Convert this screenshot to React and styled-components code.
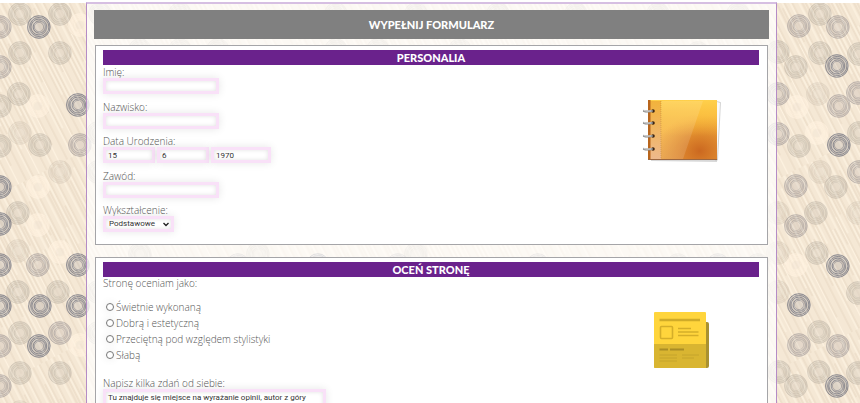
import React from "react";
import styled, { createGlobalStyle } from "styled-components";

const GlobalStyle = createGlobalStyle`
  * { box-sizing: border-box; }
  body { margin: 0; background: #fff; }
`;

const textFont = '"Open Sans", "Noto Sans", sans-serif';

const Page = styled.div`
  position: relative;
  height: 100vh;
  overflow: hidden auto;
  scrollbar-width: none;
  padding: 2px 83px 0 86px;
  font: 300 10px/12px ${textFont};
  color: #555;
`;

const Backdrop = styled.svg`
  position: absolute;
  inset: 3px 0 0;
  width: 100%;
  height: calc(100% - 3px);
`;

const Panel = styled.main`
  position: relative;
  display: flex;
  flex-direction: column;
  padding: 6px 7px 20px;
  border: 1px solid #b58cc6;
  border-top: 2px solid #d6bfe2;
  background: rgba(255, 255, 255, 0.73);
`;

const Title = styled.h1`
  margin: 0 0 6px;
  background: #808080;
  color: #fff;
  font: 900 11px/29px Lato, sans-serif;
  text-align: center;
`;

const Section = styled.section`
  margin: 0 1px 12px;
  padding: 4px 8px 12px 7px;
  border: 1px solid #a5a5a8;
  background: #fff;
`;

const SectionTitle = styled.h2`
  margin: 0;
  background: #6a228c;
  color: #fff;
  font: 900 11px/15px Lato, sans-serif;
  text-align: center;
`;

const SectionBody = styled.div`
  display: grid;
  grid-template-columns: 1fr 156px;
`;

const Picture = styled.div`
  display: flex;
  justify-content: center;
  align-items: flex-start;
  padding-top: 33px;
`;

const Fields = styled.div`
  display: flex;
  flex-direction: column;
  justify-content: space-between;
  min-height: 167px;
  padding-top: 1px;
`;

const Field = styled.div`
  display: flex;
  flex-direction: column;
  align-items: flex-start;
`;

const Controls = styled.div`
  display: flex;
  gap: 2px;
`;

const control = `
  margin: 0;
  border: 3px solid #f9e1f8;
  border-radius: 0;
  background: #fff;
  box-shadow: 0 0 8px rgba(0, 0, 0, 0.1), inset 0 0 4px rgba(0, 0, 0, 0.12);
  color: #333;
  font: 400 8px/10px Roboto, sans-serif;
  outline: none;
`;

const TextBox = styled.input`
  ${control}
  width: ${(p) => p.$width || 116}px;
  height: 16px;
  padding: 0 2px;
`;

const SelectWrap = styled.div`
  position: relative;
  display: flex;
`;

const Select = styled.select`
  ${control}
  appearance: none;
  width: 71px;
  height: 16px;
  padding: 0 3px;
`;

const Chevron = styled.svg`
  position: absolute;
  right: 5px;
  top: 6px;
  width: 6px;
  height: 5px;
  pointer-events: none;
`;

const Choices = styled.fieldset`
  margin: 0 0 14px;
  padding: 0;
  border: 0;
  line-height: 16px;
`;

const Legend = styled.legend`
  margin-bottom: 10px;
  padding: 0;
  line-height: 12px;
`;

const Choice = styled.label`
  display: flex;
  align-items: center;
  gap: 2px;
  padding-left: 3px;
`;

const Radio = styled.input`
  appearance: none;
  width: 8px;
  height: 8px;
  margin: 0;
  border: 1px solid #777;
  border-radius: 50%;
  background: #fff;
  box-shadow: 0 0 8px rgba(0, 0, 0, 0.1);
  &:checked { background: #6a228c; }
`;

const Opinion = styled.textarea`
  ${control}
  width: 223px;
  height: 60px;
  padding: 1px 2px;
  resize: none;
  overflow: hidden;
`;

const tones = {
  cream: { color: "#fff2df", line: 0.5, fill: 0.6 },
  faint: { color: "#b0a598", line: 0.14, fill: 0.12 },
  light: { color: "#9c9389", line: 0.22, fill: 0.18 },
  mid: { color: "#858287", line: 0.38, fill: 0.2 },
  dark: { color: "#5d6072", line: 0.6, fill: 0.22 },
};

const rings = {
  cream: [[80, 25], [38, 106], [38, 187], [38, 225], [60, 252], [80, 345], [797, 107], [817, 133], [796, 265]],
  faint: [[20, 133], [60, 172], [18, 251], [818, 94], [820, 172], [778, 213], [778, 253], [778, 292], [20, 412], [858, 213]],
  light: [
    [20, 14], [60, 14], [20, 53], [60, 53], [19, 94], [0, 106], [0, 146], [40, 145], [18, 213], [18, 292],
    [58, 292], [20, 333], [20, 373], [60, 373], [820, 14], [778, 52], [820, 53], [796, 67], [859, 54],
    [799, 146], [859, 133], [836, 187], [816, 213], [817, 253], [858, 293], [819, 332], [779, 372],
    [819, 372], [796, 386], [858, 373], [100, 14], [180, 14], [336, 14], [416, 14], [498, 14], [576, 14],
    [658, 14], [738, 14], [140, 50], [180, 50], [218, 50], [336, 50], [378, 50], [460, 50], [698, 53],
    [98, 133], [98, 172], [98, 292], [98, 333], [140, 254], [258, 254], [416, 254], [758, 265], [678, 265],
  ],
  mid: [
    [0, 27], [80, 145], [38, 265], [60, 333], [0, 346], [838, 27], [858, 93], [778, 94], [839, 106],
    [778, 134], [859, 172], [796, 226], [838, 346], [238, 265], [718, 265], [398, 265], [538, 265],
    [799, 26], [796, 186], [799, 345], [0, 67], [0, 386],
  ],
  dark: [
    [39, 27], [78, 105], [0, 187], [0, 224], [0, 265], [78, 265], [0, 306], [40, 306], [78, 306], [39, 346],
    [837, 66], [839, 145], [838, 266], [799, 305], [837, 386], [318, 265],
  ],
};

function Ring({ x, y, tone }) {
  const t = tones[tone];
  return (
    <g transform={`translate(${x} ${y - 3})`} stroke={t.color} fill="none">
      <circle r="11.7" fill={t.color} fillOpacity={t.fill} stroke="none" />
      {[11.3, 9.6, 7.9, 6.1].map((r, i) => (
        <circle key={r} cx={i % 2 ? 0.3 : -0.2} r={r} strokeWidth="1" strokeOpacity={t.line} />
      ))}
      <circle r="4.6" fill="#eee2d3" fillOpacity="0.4" strokeWidth="0.6" strokeOpacity={t.line} />
    </g>
  );
}

function PatternBackdrop() {
  return (
    <Backdrop viewBox="0 0 860 400" preserveAspectRatio="xMidYMin slice" aria-hidden="true">
      <defs>
        <pattern id="grain" width="23" height="170" patternUnits="userSpaceOnUse" patternTransform="rotate(-27)">
          <path d="M2 0V90M5 20V150M9 0V60M12 40V170M16 0V120M20 70V170" stroke="#dccbb5" strokeOpacity=".4" strokeWidth="1.1" />
          <path d="M3.5 60V170M7 0V80M14 10V110M18 70V170M22 0V140" stroke="#fff5e4" strokeOpacity=".7" strokeWidth="1.2" />
        </pattern>
      </defs>
      <rect width="860" height="400" fill="#f5e8d5" />
      <rect width="860" height="400" fill="url(#grain)" />
      {Object.entries(rings).map(([tone, points]) =>
        points.map(([x, y]) => <Ring key={`${x}-${y}`} x={x} y={y} tone={tone} />)
      )}
      <rect width="860" height="400" fill="url(#grain)" opacity=".3" />
    </Backdrop>
  );
}

function Notebook() {
  return (
    <svg width="80" height="66" viewBox="-2 0 80 66" aria-hidden="true">
      <defs>
        <linearGradient id="cover" x1="0" y1="0" x2=".35" y2="1">
          <stop offset="0" stopColor="#f3ad31" />
          <stop offset=".5" stopColor="#f6b23c" />
          <stop offset="1" stopColor="#e59a3e" />
        </linearGradient>
        <linearGradient id="top" x1="0" y1="0" x2="0" y2="1">
          <stop offset="0" stopColor="#ffd04b" />
          <stop offset="1" stopColor="#ffc33c" stopOpacity="0" />
        </linearGradient>
        <radialGradient id="glow" cx=".75" cy=".85" r=".62">
          <stop offset="0" stopColor="#cb6820" />
          <stop offset="1" stopColor="#dc7d20" stopOpacity="0" />
        </radialGradient>
        <linearGradient id="spine" x1="0" y1="0" x2="0" y2="1">
          <stop offset="0" stopColor="#efac38" />
          <stop offset="1" stopColor="#efc0a2" />
        </linearGradient>
      </defs>
      <path d="M8 4L77 4L74 64L8 63Z" fill="#d8d8d8" />
      <path d="M72 3L77.500 4.500L74.500 62L72 62Z" fill="#fafafa" stroke="#bbb" strokeWidth=".6" />
      <rect x="5" y="2" width="69" height="60" rx="1" fill="url(#cover)" />
      <rect x="5" y="2" width="69" height="60" rx="1" fill="url(#glow)" />
      <rect x="5" y="2" width="69" height="36" rx="1" fill="url(#top)" />
      <rect x="7" y="3" width="11" height="59" fill="url(#spine)" opacity=".8" />
      <path d="M5 2H7.500V62H5Z" fill="#b8651c" />
      <path d="M18 3V61" stroke="#a06422" strokeOpacity=".6" strokeWidth=".6" strokeDasharray="1 1" />
      <path d="M18 3H60L40 61H18Z" fill="#fff" opacity=".13" />
      <path d="M5 61.500H74" stroke="#9c6740" strokeWidth="1" />
      {[13, 25, 38, 51].map((y) => (
        <g key={y}>
          <circle cx="10" cy={y} r="1.800" fill="#3a2414" />
          <path d={`M9 ${y}Q4 ${y + 1} 1 ${y}`} stroke="#888" strokeWidth="2.200" fill="none" strokeLinecap="round" />
          <path d={`M8 ${y}Q4 ${y + 0.5} 1 ${y - 0.3}`} stroke="#e2e2e2" strokeWidth="1" fill="none" strokeLinecap="round" />
        </g>
      ))}
    </svg>
  );
}

function NotePage() {
  return (
    <svg width="80" height="66" viewBox="0 1 80 66" aria-hidden="true">
      <path d="M62 13H66Q68 13 68 15V57Q68 59 66 59H62Z" fill="#a99130" />
      <rect x="13" y="3" width="52" height="56" rx="1" fill="#ffd53c" />
      <path d="M13 35H65V58Q65 59 64 59H14Q13 59 13 58Z" fill="#d9b531" />
      <path d="M18.500 11H59" stroke="#d0ab28" strokeWidth="2.500" />
      <rect x="19.500" y="17.500" width="12" height="12" rx="1" fill="none" stroke="#d5ae29" strokeWidth="1.600" />
      <path d="M37 19.500H50M37 23H57.500M37 26.500H57.500" stroke="#d5ae29" strokeWidth="1.400" />
      <path d="M18.500 40.500H27M29 40.500H43" stroke="#aa8d26" strokeWidth="2" />
      <path d="M18.500 46H36M18.500 49H36M18.500 52H36M41 46H58M41 49H53" stroke="#c5a42d" strokeWidth="1" />
    </svg>
  );
}

const choices = ["Świetnie wykonaną", "Dobrą i estetyczną", "Przeciętną pod względem stylistyki", "Słabą"];

function TextField({ id, label }) {
  return (
    <Field>
      <label htmlFor={id}>{label}</label>
      <TextBox id={id} type="text" />
    </Field>
  );
}

export default function App() {
  return (
    <>
      <GlobalStyle />
      <Page>
        <PatternBackdrop />
        <Panel>
          <Title>WYPEŁNIJ FORMULARZ</Title>
          <Section>
            <SectionTitle>PERSONALIA</SectionTitle>
            <SectionBody>
              <Fields>
                <TextField id="first-name" label="Imię:" />
                <TextField id="last-name" label="Nazwisko:" />
                <Field>
                  <label htmlFor="day">Data Urodzenia:</label>
                  <Controls>
                    <TextBox id="day" $width={52} defaultValue="15" />
                    <TextBox aria-label="Miesiąc" $width={52} defaultValue="6" />
                    <TextBox aria-label="Rok" $width={60} defaultValue="1970" />
                  </Controls>
                </Field>
                <TextField id="job" label="Zawód:" />
                <Field>
                  <label htmlFor="education">Wykształcenie:</label>
                  <SelectWrap>
                    <Select id="education">
                      <option>Podstawowe</option>
                    </Select>
                    <Chevron viewBox="0 0 6 5" aria-hidden="true">
                      <path d="M.5 1L3 3.500L5.500 1" fill="none" stroke="#222" strokeWidth="1.400" />
                    </Chevron>
                  </SelectWrap>
                </Field>
              </Fields>
              <Picture><Notebook /></Picture>
            </SectionBody>
          </Section>
          <Section>
            <SectionTitle>OCEŃ STRONĘ</SectionTitle>
            <SectionBody>
              <div>
                <Choices>
                  <Legend>Stronę oceniam jako:</Legend>
                  {choices.map((text) => (
                    <Choice key={text}>
                      <Radio type="radio" name="rating" />
                      {text}
                    </Choice>
                  ))}
                </Choices>
                <Field>
                  <label htmlFor="opinion">Napisz kilka zdań od siebie:</label>
                  <Opinion id="opinion" defaultValue="Tu znajduje się miejsce na wyrażanie opinii, autor z góry" />
                </Field>
              </div>
              <Picture><NotePage /></Picture>
            </SectionBody>
          </Section>
        </Panel>
      </Page>
    </>
  );
}
